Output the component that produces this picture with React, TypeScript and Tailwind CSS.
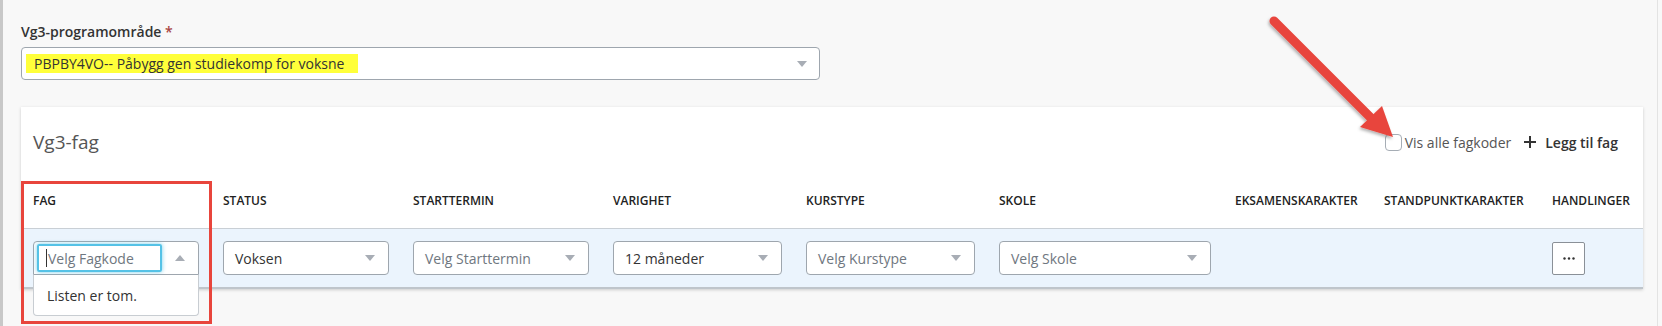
import React from "react";

const font = { fontFamily: '"Open Sans", "Noto Sans", sans-serif' };

function Caret({ up = false }: { up?: boolean }) {
  return (
    <svg width="10" height="6" viewBox="0 0 10 6" className="shrink-0">
      {up ? (
        <path d="M0 6 L5 0 L10 6 Z" fill="#a8adb5" />
      ) : (
        <path d="M0 0 L10 0 L5 6 Z" fill="#a8adb5" />
      )}
    </svg>
  );
}

function Select({ text, placeholder = false }: { text: string; placeholder?: boolean }) {
  return (
    <div className="flex h-[34px] w-full items-center justify-between rounded-[4px] border border-[#9ea6ae] bg-white pl-[11px] pr-[13px]">
      <span className={placeholder ? "text-[14px] text-[#6f7780]" : "text-[14px] text-[#333]"}>{text}</span>
      <Caret />
    </div>
  );
}

export default function App() {
  const headers = [
    "FAG",
    "STATUS",
    "STARTTERMIN",
    "VARIGHET",
    "KURSTYPE",
    "SKOLE",
    "EKSAMENSKARAKTER",
    "STANDPUNKTKARAKTER",
    "HANDLINGER",
  ];
  const grid = "grid grid-cols-[190px_190px_200px_193px_193px_236px_149px_168px_1fr]";
  return (
    <div
      className="relative h-[326px] w-full overflow-hidden border-l-[3px] border-[#c8c8c8] bg-[#f8f8f8]"
      style={font}
    >
      <div className="ml-[18px] mr-[19px] pt-[22px]">
        <div className="text-[14px] font-semibold leading-[20px] text-[#333]">
          Vg3-programområde <span className="text-[#a94442]">*</span>
        </div>
        <div className="mt-[5px] flex h-[33px] w-[799px] items-center justify-between rounded-[4px] border border-[#9ea6ae] bg-white pl-[4px] pr-[12px]">
          <span className="bg-[#ffff3a] py-[1px] pl-[8px] pr-[14px] text-[14px] leading-[17px] text-[#333]">
            PBPBY4VO-- Påbygg gen studiekomp for voksne
          </span>
          <Caret />
        </div>

        <div className="mt-[27px] bg-white shadow-[0_1px_3px_rgba(0,0,0,0.18)]">
          <div className="flex h-[66px] items-center justify-between pl-[12px] pr-[25px] pt-[4px]">
            <div className="text-[19px] leading-[26px] text-[#555]">Vg3-fag</div>
            <div className="flex items-center">
              <span className="h-[17px] w-[17px] rounded-[4px] border border-[#a6adb5] bg-white" />
              <span className="ml-[3px] text-[14px] text-[#555]">Vis alle fagkoder</span>
              <svg width="12" height="12" viewBox="0 0 12 12" className="ml-[13px]">
                <path d="M6 0 V12 M0 6 H12" stroke="#333" strokeWidth="2" />
              </svg>
              <span className="ml-[9px] text-[14px] font-semibold text-[#333]">Legg til fag</span>
            </div>
          </div>

          <div className={grid + " h-[56px] items-center border-b border-[#c9cfd5]"}>
            {headers.map((h) => (
              <div key={h} className="px-3 text-[12px] font-semibold text-[#222]">
                {h}
              </div>
            ))}
          </div>

          <div className={grid + " h-[60px] items-center border-b-2 border-[#bfc5cb] bg-[#ebf4fd]"}>
            <div className="relative px-3">
              <div className="flex h-[34px] w-full items-center justify-between rounded-t-[4px] border border-[#9ea6ae] bg-white pl-[3px] pr-[13px]">
                <div className="flex h-[28px] w-[125px] items-center rounded-[2px] border-2 border-[#55c2e6] pl-[7px] shadow-[0_0_4px_rgba(85,194,230,0.8)]">
                  <span className="mr-[1px] h-[18px] w-[1px] bg-[#333]" />
                  <span className="text-[14px] text-[#6f7780]">Velg Fagkode</span>
                </div>
                <Caret up />
              </div>
              <div className="absolute left-3 right-3 top-[34px] z-10 flex h-[41px] items-center rounded-b-[4px] border border-t-0 border-[#c8cdd2] bg-white pl-[13px] text-[14px] text-[#333]">
                Listen er tom.
              </div>
            </div>
            <div className="px-3">
              <Select text="Voksen" />
            </div>
            <div className="px-3">
              <Select text="Velg Starttermin" placeholder />
            </div>
            <div className="px-3">
              <Select text="12 måneder" />
            </div>
            <div className="px-3">
              <Select text="Velg Kurstype" placeholder />
            </div>
            <div className="px-3">
              <Select text="Velg Skole" placeholder />
            </div>
            <div />
            <div />
            <div className="px-3">
              <div className="flex h-[33px] w-[33px] items-center justify-center rounded-[2px] border border-[#8a9097] bg-white">
                <svg width="12" height="3" viewBox="0 0 12 3">
                  <circle cx="1.5" cy="1.5" r="1.2" fill="#333" />
                  <circle cx="6" cy="1.5" r="1.2" fill="#333" />
                  <circle cx="10.5" cy="1.5" r="1.2" fill="#333" />
                </svg>
              </div>
            </div>
          </div>
        </div>
      </div>

      {/* right edge line */}
      <div className="pointer-events-none absolute right-[4px] top-0 h-full w-px bg-[#e3e3e3]" />

      {/* red annotation box */}
      <div className="pointer-events-none absolute left-[18px] top-[181px] z-20 h-[143px] w-[191px] border-[3px] border-[#e8453c]" />

      {/* red arrow */}
      <svg
        className="pointer-events-none absolute left-0 top-0 z-20"
        width="1662"
        height="326"
        viewBox="0 0 1662 326"
      >
        <defs>
          <filter id="sh" x="-20%" y="-20%" width="140%" height="140%">
            <feDropShadow dx="-1" dy="2" stdDeviation="1.5" floodColor="#000" floodOpacity="0.3" />
          </filter>
        </defs>
        <g filter="url(#sh)">
          <line x1="1271" y1="21" x2="1368" y2="118" stroke="#e8453c" strokeWidth="9" strokeLinecap="round" />
          <path d="M1390 137 L1357 127 L1379 106 Z" fill="#e8453c" />
        </g>
      </svg>
    </div>
  );
}
